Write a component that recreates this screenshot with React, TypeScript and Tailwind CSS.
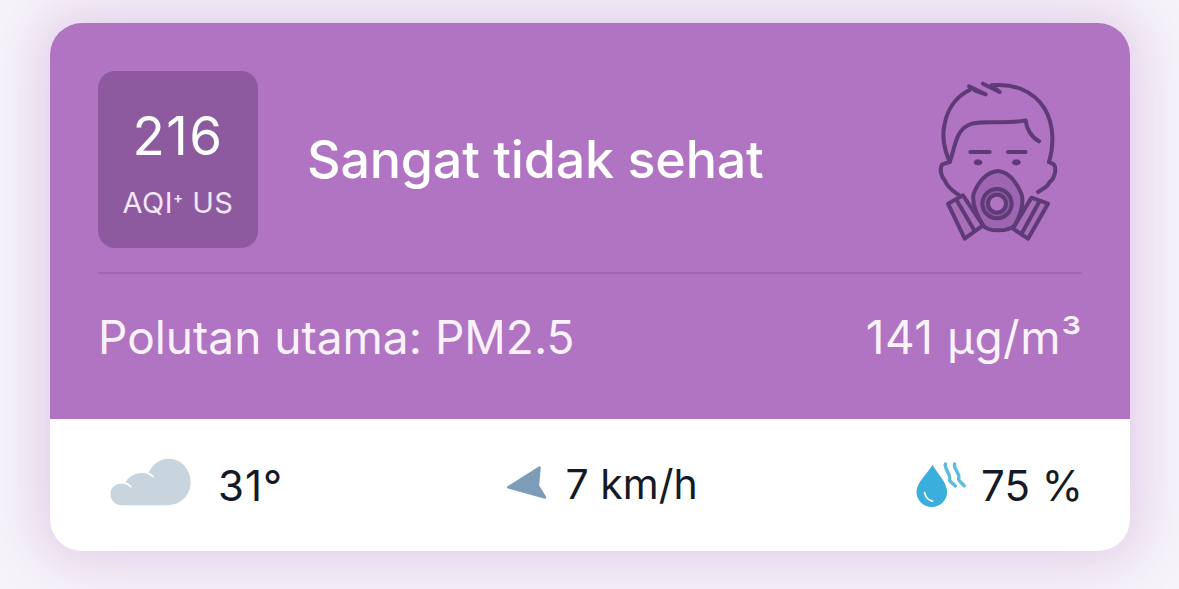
export default function App() {
  return (
    <div className="w-[1179px] h-[589px] overflow-hidden bg-[#f6f3f9] pt-[23px] pl-[50px] font-['Inter',sans-serif]">
      <div className="w-[1080px] h-[528px] rounded-[32px] overflow-hidden bg-white shadow-[0_0_50px_12px_rgba(176,116,194,0.28)]">
        {/* AQI section */}
        <div className="h-[396px] bg-[#b074c2] pt-[48px] px-[48px] text-white">
          <div className="flex items-center h-[177px]">
            <div className="w-[160px] h-[177px] rounded-[17px] bg-[#8d5a9f] flex flex-col items-center">
              <span className="mt-[33px] text-[53px] leading-[64px] tracking-[1.5px]">216</span>
              <span className="mt-[17px] text-[29px] leading-[36px] tracking-[0.5px] text-[#f3e6f7]">
                AQI<span className="relative top-[-10px] text-[15px] leading-none font-semibold">+</span> US
              </span>
            </div>
            <span className="ml-[49px] text-[52px] leading-[60px] font-medium tracking-[-0.2px]">Sangat tidak sehat</span>
            <MaskIcon />
          </div>
          <div className="mt-[24px] h-[2px] bg-[#a066b3]" />
          <div className="mt-[35px] flex justify-between items-center text-[46px] leading-[56px] text-[#f9f2fb]">
            <span>Polutan utama: PM2.5</span>
            <span className="tracking-[0.5px]">141 µg/m³</span>
          </div>
        </div>

        {/* Weather row */}
        <div className="h-[132px] flex items-center justify-between pl-[59px] pr-[47px] text-[42px] text-[#141a26]">
          <div className="flex items-center gap-[26px]">
            <svg className="mt-[-7px]" width="83" height="50" viewBox="90 50 250 150">
              <path
                d="M130 195C105 195 92 175 95 155C98 138 115 128 138 130C148 105 175 92 208 100C220 70 245 55 270 55C310 55 336 90 336 125C336 165 305 195 265 195Z"
                fill="#c8d5df"
              />
              <path d="M135 127C143 129 150 133 156 139M205 97C212 100 218 104 223 109" fill="none" stroke="#fff" strokeWidth="5" strokeLinecap="round" />
            </svg>
            <span className="tracking-[1px]">31°</span>
          </div>
          <div className="flex items-center gap-[19px] ml-[4px]">
            <svg className="mt-[-6px]" width="42" height="36" viewBox="40 55 128 108">
              <path d="M50 125L145 65L140 120L162 156Z" fill="#7d9cb8" stroke="#7d9cb8" strokeWidth="8" strokeLinejoin="round" />
            </svg>
            <span className="text-[41px]">7 km/h</span>
          </div>
          <div className="flex items-center gap-[14px]">
            <svg width="52" height="46" viewBox="45 50 150 135">
              <path d="M95 58C80 85 48 110 48 138C48 162 68 182 93 182C118 182 138 162 138 138C138 110 110 85 95 58Z" fill="#3aaedc" />
              <path d="M72 140C74 152 82 162 95 165" fill="none" stroke="#fff" strokeWidth="5" strokeLinecap="round" />
              <path
                d="M133 56C128 70 150 85 145 100C143 107 155 112 162 120M160 56C155 70 177 82 172 98C170 105 182 112 188 120"
                fill="none"
                stroke="#5bbcdb"
                strokeWidth="10"
                strokeLinecap="round"
              />
            </svg>
            <span>75 %</span>
          </div>
        </div>
      </div>
    </div>
  )
}

function MaskIcon() {
  return (
    <svg className="ml-auto mr-[24px] mt-[2px]" width="121" height="160" viewBox="112 62 363 480" fill="none" stroke="#5e3a77" strokeWidth="12" strokeLinecap="round" strokeLinejoin="round">
      <path d="M295 332C260 335 235 365 222 400C215 430 235 470 250 495C265 515 325 515 345 495C360 470 375 430 365 400C350 365 330 335 295 332Z" fill="#9e66b0" />
      <path d="M150 305C135 270 125 230 135 190C145 140 175 105 212 88" />
      <path d="M208 78L258 102L225 90" />
      <path d="M250 70L300 95L275 75C340 68 400 90 435 145C465 195 462 260 448 305" />
      <path d="M150 305C165 270 165 215 205 195C240 175 310 195 378 180C380 205 395 230 418 243" />
      <path d="M150 305L128 312C118 325 125 350 135 360C145 385 165 395 178 405" />
      <path d="M448 305L462 312C472 325 465 355 450 365C445 380 430 385 415 395" />
      <path d="M212 275H270M325 275H378" />
      <ellipse cx="235" cy="306" rx="12" ry="8" fill="#5e3a77" strokeWidth="2" />
      <ellipse cx="350" cy="306" rx="12" ry="8" fill="#5e3a77" strokeWidth="2" />
      <circle cx="292" cy="430" r="44" fill="#8d5a9f" />
      <circle cx="292" cy="430" r="27" fill="#b074c2" />
      <path d="M145 430L190 405L250 495L195 535Z" fill="#a86eba" />
      <path d="M170 418L225 512" />
      <path d="M395 412L445 430L385 535L340 505Z" fill="#a86eba" />
      <path d="M420 422L365 522" />
    </svg>
  )
}
